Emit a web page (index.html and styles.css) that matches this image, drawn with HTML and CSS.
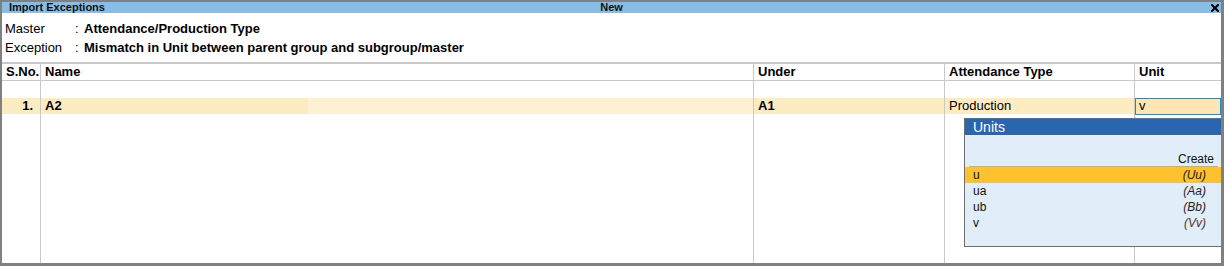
FILE: index.html
```html
<!DOCTYPE html>
<html>
<head>
<meta charset="utf-8">
<link rel="stylesheet" href="styles.css">
</head>
<body>
<div class="window">
  <div class="titlebar">
    <span class="t-left">Import Exceptions</span>
    <span class="t-center">New</span>
    <span class="t-right">
      <svg class="close" width="8" height="8" viewBox="0 0 8 8"><path d="M1 1 L7 7 M7 1 L1 7" stroke="#000" stroke-width="2" stroke-linecap="square"/></svg>
    </span>
  </div>
  <div class="info">
    <div class="info-row"><span class="info-label">Master</span><span class="info-colon">:</span><span class="info-value">Attendance/Production Type</span></div>
    <div class="info-row"><span class="info-label">Exception</span><span class="info-colon">:</span><span class="info-value">Mismatch in Unit between parent group and subgroup/master</span></div>
  </div>
  <div class="table">
    <div class="col col-sno">
      <div class="cell head">S.No.</div>
      <div class="cell spacer"></div>
      <div class="cell data num">1.</div>
      <div class="filler"></div>
    </div>
    <div class="col col-name">
      <div class="cell head">Name</div>
      <div class="cell spacer"></div>
      <div class="cell data name-data"><span class="name-field">A2</span></div>
      <div class="filler"></div>
    </div>
    <div class="col col-under">
      <div class="cell head">Under</div>
      <div class="cell spacer"></div>
      <div class="cell data bold">A1</div>
      <div class="filler"></div>
    </div>
    <div class="col col-att">
      <div class="cell head">Attendance Type</div>
      <div class="cell spacer"></div>
      <div class="cell data">Production</div>
      <div class="filler"></div>
    </div>
    <div class="col col-unit">
      <div class="cell head">Unit</div>
      <div class="cell spacer"></div>
      <div class="cell unit-data"><span class="unit-input">v</span></div>
      <div class="filler"></div>
    </div>
  </div>
  <div class="popup">
    <div class="popup-head">Units</div>
    <div class="popup-body">
      <div class="popup-create"><span>Create</span></div>
      <div class="popup-list">
        <div class="item selected"><span>u</span><span class="alias">(Uu)</span></div>
        <div class="item"><span>ua</span><span class="alias">(Aa)</span></div>
        <div class="item"><span>ub</span><span class="alias">(Bb)</span></div>
        <div class="item"><span>v</span><span class="alias alias-v">(Vv)</span></div>
      </div>
    </div>
  </div>
</div>
</body>
</html>
```

FILE: styles.css
```css
html, body {
  margin: 0;
  padding: 0;
  background: #ffffff;
}
body {
  font-family: "Liberation Sans", Arial, sans-serif;
  color: #000;
}
.window {
  position: relative;
  width: 1224px;
  height: 266px;
  box-sizing: border-box;
  border-top: 2px solid #808080;
  border-left: 2px solid #808080;
  border-right: 3px solid #808080;
  border-bottom: 3px solid #808080;
  display: flex;
  flex-direction: column;
  background: #fff;
}
.titlebar {
  height: 11px;
  background: #88bde6;
  display: grid;
  grid-template-columns: 1fr auto 1fr;
  align-items: center;
  font-size: 11px;
  font-weight: bold;
  line-height: 11px;
  color: #111;
}
.t-left { padding-left: 7px; }
.t-center { text-align: center; }
.t-right {
  display: flex;
  justify-content: flex-end;
  padding-right: 2px;
}
.close { display: block; }
.info {
  padding: 6px 0 0 3px;
  height: 43px;
  font-size: 13px;
  line-height: 19px;
}
.info-row { display: flex; }
.info-label { width: 70px; }
.info-colon { width: 9px; }
.info-value { font-weight: bold; }
.table {
  flex: 1;
  display: flex;
  border-top: 2px solid #c8c8c8;
  font-size: 13px;
}
.col {
  display: flex;
  flex-direction: column;
  box-sizing: border-box;
  border-right: 1px solid #c8c8c8;
}
.col-sno { width: 39px; }
.col-name { width: 713px; }
.col-under { width: 191px; }
.col-att { width: 190px; }
.col-unit { flex: 1; border-right: none; }
.cell {
  box-sizing: border-box;
  white-space: nowrap;
}
.head {
  height: 17px;
  line-height: 16px;
  border-bottom: 1px solid #c8c8c8;
  font-weight: bold;
  padding-left: 4px;
}
.spacer { height: 17px; }
.data {
  height: 16px;
  line-height: 16px;
  background: #fdebc1;
  padding-left: 4px;
}
.num {
  text-align: right;
  padding-right: 7px;
  font-weight: bold;
}
.bold { font-weight: bold; }
.name-data {
  padding-left: 0;
  background: #fef0d2;
}
.name-field {
  display: block;
  width: 263px;
  height: 16px;
  padding-left: 4px;
  background: #fdebc1;
  font-weight: bold;
}
.unit-data { height: 16px; }
.unit-input {
  display: block;
  box-sizing: border-box;
  height: 17px;
  border: 1px solid #1b8ad0;
  background: #fde6b4;
  padding-left: 3px;
  line-height: 14px;
}
.filler { flex: 1; }
.popup {
  position: absolute;
  left: 962px;
  top: 116px;
  width: 257px;
  height: 129px;
  box-sizing: border-box;
  border: 1px solid #6e6e6e;
  border-right: none;
  display: flex;
  flex-direction: column;
  background: #e1eef9;
  font-size: 12px;
}
.popup-head {
  height: 16px;
  background: #2a66b0;
  color: #fff;
  font-size: 14px;
  line-height: 16px;
  padding-left: 8px;
}
.popup-body {
  flex: 1;
  display: flex;
  flex-direction: column;
}
.popup-create {
  margin-top: 16px;
  margin-left: 4px;
  margin-right: 3px;
  height: 16px;
  box-sizing: border-box;
  border-bottom: 1px solid #9fb3c6;
  text-align: right;
  line-height: 16px;
  padding-right: 4px;
  color: #111;
}
.popup-list { display: flex; flex-direction: column; }
.item {
  height: 16px;
  line-height: 16px;
  display: flex;
  justify-content: space-between;
  padding-left: 8px;
  padding-right: 15px;
  color: #111;
}
.item.selected { background: #fdc22e; }
.alias { font-style: italic; color: #2a2020; }
.alias-v { color: #5a2c2c; }
```
